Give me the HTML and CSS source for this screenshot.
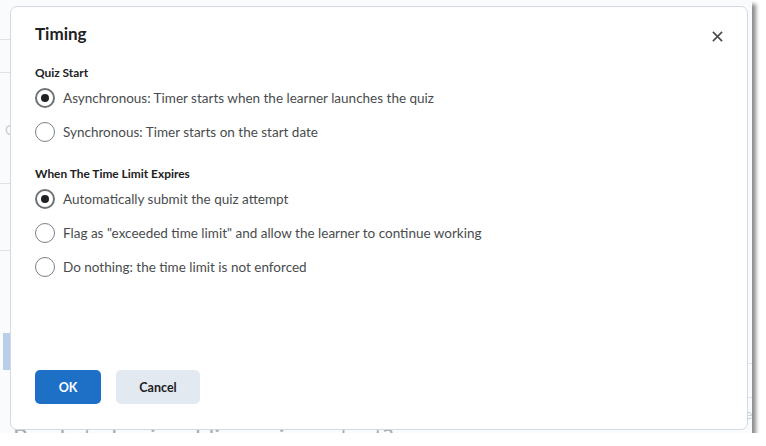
FILE: index.html
```html
<!DOCTYPE html>
<html lang="en">
<head>
    <meta charset="UTF-8">
    <title>Timing</title>
    <link rel="stylesheet" href="styles.css">
</head>
<body>
    <div class="shot">
        <!-- faded page behind the dialog -->
        <div class="page">
            <div class="side">
                <div class="side-row r1"></div>
                <div class="side-row r2"></div>
                <div class="side-row r3"><span class="side-text">C</span></div>
                <div class="side-row r4"></div>
                <div class="side-row r5"></div>
                <div class="side-row r6 selected"></div>
            </div>
            <div class="main">
                <div class="main-rows">
                    <div class="main-row"></div>
                    <div class="main-row short"><span>e</span></div>
                </div>
                <h2 class="empty-title">Ready to begin adding quiz content?</h2>
            </div>
        </div>

        <div class="dialog">
            <header class="dialog-header">
                <h1>Timing</h1>
                <button class="close-btn" aria-label="Close">
                    <svg viewBox="0 0 12 12">
                        <path d="M1 1L11 11M11 1L1 11"/>
                    </svg>
                </button>
            </header>

            <div class="dialog-body">
                <div class="group-label">Quiz Start</div>
                <label class="radio-row">
                    <span class="radio checked"></span>
                    Asynchronous: Timer starts when the learner launches the quiz
                </label>
                <label class="radio-row">
                    <span class="radio"></span>
                    Synchronous: Timer starts on the start date
                </label>

                <div class="group-label second">When The Time Limit Expires</div>
                <label class="radio-row">
                    <span class="radio checked"></span>
                    Automatically submit the quiz attempt
                </label>
                <label class="radio-row">
                    <span class="radio"></span>
                    Flag as "exceeded time limit" and allow the learner to continue working
                </label>
                <label class="radio-row">
                    <span class="radio"></span>
                    Do nothing: the time limit is not enforced
                </label>
            </div>

            <footer class="dialog-footer">
                <button class="btn btn-primary">OK</button>
                <button class="btn btn-secondary">Cancel</button>
            </footer>
        </div>
    </div>
</body>
</html>
```

FILE: styles.css
```css
* {
    margin: 0;
    padding: 0;
    box-sizing: border-box;
}

body {
    font-family: Lato, "Open Sans", sans-serif;
    background-color: #ffffff;
    color: #494c4e;
}

.shot {
    position: relative;
    width: 752px;
    height: 433px;
    overflow: hidden;
    background: #fafbfc;
    box-shadow: 4px 4px 4px rgba(0, 0, 0, 0.45);
}

/* background page */
.page {
    display: grid;
    grid-template-columns: 10px 1fr;
    height: 100%;
}

.side {
    display: flex;
    flex-direction: column;
}

.side-row {
    border-bottom: 1px solid #dfe1e4;
}

.r1 { height: 40px; }
.r2 { height: 33px; }
.r3 { height: 111px; padding: 46px 0 0 5px; }
.r4 { height: 67px; }
.r5 { height: 82px; border-bottom: none; }
.r6 { height: 37px; border-bottom: none; }

.side-text {
    color: #c9cccf;
    font-size: 13px;
}

.selected {
    margin-left: 3px;
    background: #b9cfe8;
}

.main {
    display: flex;
    flex-direction: column;
    justify-content: flex-end;
    padding-left: 3px;
}

.main-row {
    height: 34px;
    border-top: 1px solid #dfe1e4;
    text-align: right;
    padding-top: 8px;
    color: #c9cccf;
    font-size: 13px;
}

.main-row.short {
    height: 25px;
}

.empty-title {
    font-weight: 400;
    font-size: 24px;
    color: #a9acaf;
    height: 11px;
    line-height: 30px;
    white-space: nowrap;
}

/* dialog */
.dialog {
    position: absolute;
    left: 10px;
    top: 6px;
    width: 738px;
    height: 424px;
    background: #ffffff;
    border: 1px solid #d3d9e3;
    border-radius: 7px;
    display: flex;
    flex-direction: column;
    padding: 0 24px 25px 24px;
}

.dialog-header {
    display: flex;
    align-items: center;
    justify-content: space-between;
    padding-top: 15px;
}

.dialog-header h1 {
    font-size: 17px;
    font-weight: 700;
    line-height: 24px;
    color: #202122;
}

.close-btn {
    background: none;
    border: none;
    width: 12px;
    height: 12px;
    margin-right: -1px;
    margin-top: 6px;
    display: flex;
}

.close-btn svg {
    width: 11px;
    height: 11px;
    stroke: #494c4e;
    stroke-width: 1.8;
    fill: none;
}

.dialog-body {
    flex: 1;
    padding-top: 19px;
}

.group-label {
    font-size: 11.9px;
    font-weight: 700;
    line-height: 16px;
    color: #202122;
}

.group-label.second {
    margin-top: 17px;
}

.radio-row {
    display: flex;
    align-items: center;
    gap: 8px;
    height: 34px;
    font-size: 13.5px;
    color: #494c4e;
}

.radio {
    width: 20px;
    height: 20px;
    border: 1.5px solid #7c8186;
    border-radius: 50%;
    display: flex;
    align-items: center;
    justify-content: center;
    flex-shrink: 0;
}

.radio.checked {
    border: 2px solid #6e7376;
}

.radio.checked::after {
    content: "";
    width: 8px;
    height: 8px;
    border-radius: 50%;
    background: #202122;
}

.dialog-footer {
    display: flex;
    gap: 15px;
}

.btn {
    height: 34px;
    border: none;
    border-radius: 5px;
    font-family: Lato, "Open Sans", sans-serif;
    font-size: 12.5px;
    font-weight: 700;
}

.btn-primary {
    width: 66px;
    background: #1e6fc6;
    color: #ffffff;
}

.btn-secondary {
    width: 84px;
    background: #e3e9f1;
    color: #202122;
}
```
